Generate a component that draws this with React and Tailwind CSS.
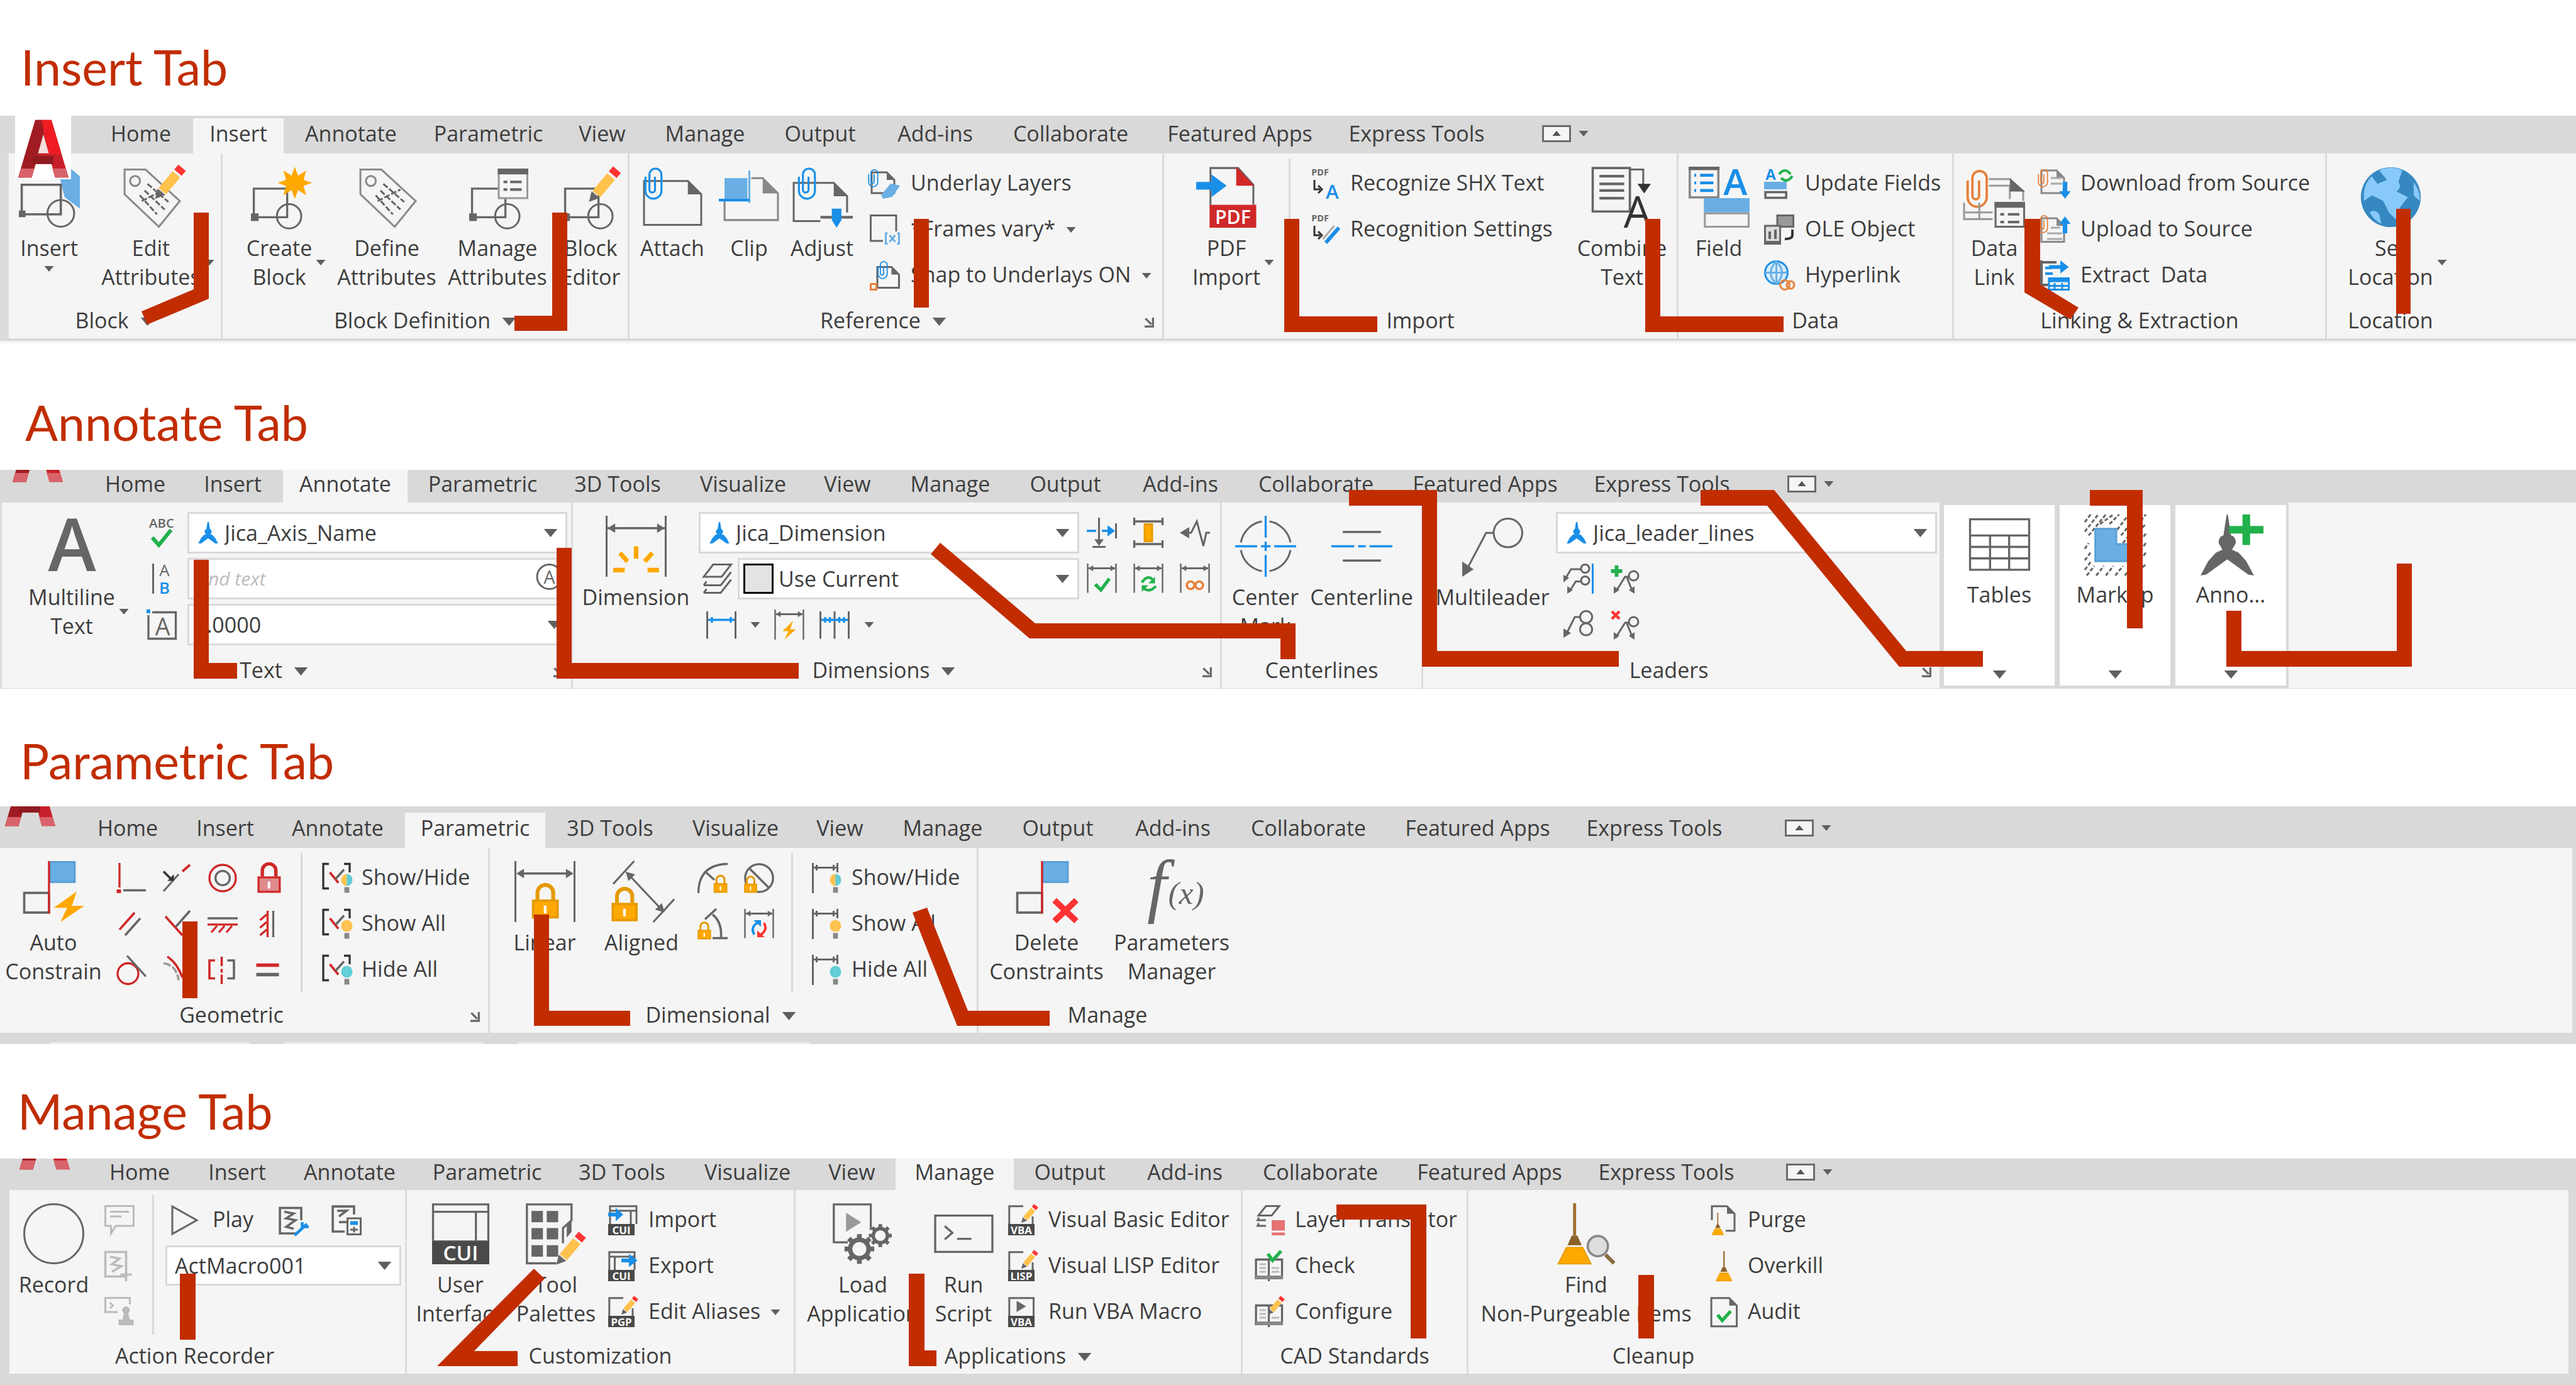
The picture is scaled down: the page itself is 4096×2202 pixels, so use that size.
import React from "react";

const G = "#666666";
const B = "#1a8fe8";
const LB = "#69afe5";
const O = "#ffa800";
const DO = "#e59a00";
const R = "#d02828";
const GR = "#22b14c";
const OR = "#e8803a";
const Y = "#ffc24d";

/* ---------- drawing helpers ---------- */
const L = ({ d, c = G, w = 1, f = "none", dash }) => (
  <path d={d} stroke={c} strokeWidth={w} fill={f} strokeDasharray={dash} />
);
const F = ({ d, c = G }) => <path d={d} fill={c} />;
const T = ({ x, y, s, c = G, b = 400, children }) => (
  <text x={x} y={y} fontSize={s} fill={c} fontWeight={b} textAnchor="middle" fontFamily="Open Sans, sans-serif">
    {children}
  </text>
);
const I16 = ({ children }) => (
  <svg viewBox="0 0 16 16" className="size-[48px] shrink-0 overflow-visible" aria-hidden="true">{children}</svg>
);
const I32 = ({ children }) => (
  <svg viewBox="0 0 32 32" className="size-[97px] shrink-0 overflow-visible" aria-hidden="true">{children}</svg>
);
const Pencil = ({ x = 0, y = 0, s = 1 }) => (
  <g transform={`translate(${x} ${y}) scale(${s})`}>
    <path d="M0 12.5 L1 8.5 L4 11Z" fill={G} />
    <path d="M2.8 9.5 L8.3 3" stroke={Y} strokeWidth="3.8" />
    <path d="M8.9 2.3 L10.5 .4" stroke="#ff3333" strokeWidth="3.8" />
  </g>
);
const Lock = ({ x = 0, y = 0, s = 1, c = O, e = DO }) => (
  <g transform={`translate(${x} ${y}) scale(${s})`}>
    <path d="M3 8V4.5a4 4 0 0 1 8 0V8" fill="none" stroke={e} strokeWidth="2" />
    <rect x=".75" y="8.5" width="12.5" height="8.5" fill={c} stroke={e} strokeWidth="1.2" />
    <rect x="6.2" y="11" width="1.4" height="4" fill="#fff" />
  </g>
);
const Dim = ({ c = G, h = 15.5, w = 16, y = 2.5 }) => (
  <g>
    <path d={`M.5 0V${h}M${w - 0.5} 0V${h}`} stroke={G} strokeWidth=".8" />
    <path d={`M1 ${y}H${w - 1}`} stroke={c} strokeWidth="1" />
    <path d={`M1 ${y}l2.4-1.6v3.2zM${w - 1} ${y}l-2.4-1.6v3.2z`} fill={c} />
  </g>
);
const Clip = ({ x = 0, y = 0, s = 1, c = B }) => (
  <g transform={`translate(${x} ${y}) scale(${s})`}>
    <path d="M5.5 5v6.5a1.4 1.4 0 0 1-2.8 0V4a3 3 0 0 1 6 0v8a4 4 0 0 1-8 0V5" fill="none" stroke={c} strokeWidth="1" />
  </g>
);
const COMPASS = "M15.700 0 16.300 0 18 11Q20.500 11.500 20.500 15L18.500 18.500 22 20 26 24.500 30 32 27 31.500 16 23.500 5 31.500 2 32 6 24.500 10 20 13.500 18.500 11.500 15Q11.500 11.500 14 11Z";
const Compass = () => (
  <svg viewBox="0 0 32 32" className="h-[34px] w-[36px] shrink-0" aria-hidden="true">
    <path d={COMPASS} fill={B} stroke={B} strokeWidth="1.5" />
  </svg>
);
const Doc = ({ x, y, w, h, f = 4, c = G, sw = 1 }) => (
  <g>
    <path d={`M${x} ${y}H${x + w - f}L${x + w} ${y + f}V${y + h}H${x}Z`} fill="none" stroke={c} strokeWidth={sw} />
    <path d={`M${x + w - f} ${y}L${x + w} ${y + f}H${x + w - f}Z`} fill={c} />
  </g>
);
const SqCircle = () => (
  <g>
    <L d="M2.500 11.500H20V26.500H2.500Z" w={1.1} />
    <F d="M1 24.500h4v4H1z" />
    <circle cx="21" cy="26" r="6.400" fill="none" stroke={G} strokeWidth="1" />
  </g>
);
const Tag = () => (
  <g>
    <L d="M2 1.500H13L31 18 20 31.500 2 14.500Z" c="#8a8a8a" />
    <circle cx="7.500" cy="7.500" r="2.600" fill="none" stroke="#8a8a8a" />
    <L d="M14 9l11 9.500M10 15l9 10M12.500 12.500l10.500 10M11 18l12-6" c={G} w={1} dash="3 1" />
  </g>
);
const Gear = ({ x, y, r }) => (
  <g transform={`translate(${x} ${y}) scale(${r})`}>
    <circle r=".62" fill="none" stroke={G} strokeWidth=".3" />
    {[0, 45, 90, 135, 180, 225, 270, 315].map((a) => (
      <rect key={a} x="-.16" y="-1" width=".32" height=".34" fill={G} transform={`rotate(${a})`} />
    ))}
  </g>
);
const Broom = ({ x = 0, y = 0, s = 1 }) => (
  <g transform={`translate(${x} ${y}) scale(${s})`}>
    <path d="M9 0h1.600v17h-1.600z" fill="#a07030" />
    <path d="M8.300 17h3l2.200 5h-7.400z" fill="#8a6128" />
    <path d="M5.500 23.200h8.600l4.300 8.600H1.200z" fill={O} stroke={DO} strokeWidth=".6" />
  </g>
);
const Badge = ({ t }) => (
  <g>
    <rect x="0" y="10" width="14" height="6" fill="#4a4a4a" />
    <T x={7} y={15.200} s={5.600} c="#fff" b={700}>{t}</T>
  </g>
);
const Bulb = ({ x, y, a, b }) => (
  <g>
    <path d={`M${x} ${y - 3.200}a3 3.200 0 0 0 0 6.400z`} fill={a} />
    <path d={`M${x} ${y - 3.200}a3 3.200 0 0 1 0 6.400z`} fill={b} />
    <rect x={x - 1.300} y={y + 3.800} width="2.600" height="3" fill="#888" />
  </g>
);
const Squares = () => (
  <g>
    <rect x="14" y=".5" width="13" height="10.500" fill={LB} stroke="#5a9fd4" />
    <L d="M.500 16.700H13.500V27H.500Z" w={1.200} />
    <L d="M13.500 0V27.500" c={R} w={1.100} />
  </g>
);

const icons = {
  /* insert */
  insert: <I32><path d="M21 4 26 0 32 5V22L24 16Z" fill={LB} /><L d="M1.500 9.500H22V25H1.500Z" w={1.200} f="#f5f5f5" /><F d="M0 23h3.500v3.500H0z" /><circle cx="22" cy="24.500" r="7" fill="none" stroke={G} /></I32>,
  editAttr: <I32><Tag /><Pencil x={18} y={0} s={1.350} /></I32>,
  create: <I32><SqCircle /><path d="M24 0l1.700 4.700L30 2l-1.400 4.900L33 8.500l-4.400 1.600L30 15l-4.300-2.700L24 17l-1.700-4.700L18 15l1.400-4.900L15 8.500l4.400-1.600L18 2l4.300 2.700z" fill={O} /></I32>,
  define: <I32><Tag /></I32>,
  manage: <I32><SqCircle /><rect x="16.500" y="1.500" width="15" height="15" fill="#f5f5f5" stroke="#999" /><F d="M16 1h16v3H16z" /><L d="M19 8h2M22.500 8h6M19 12h2M22.500 12h6" w={1.400} /></I32>,
  editor: <I32><SqCircle /><Pencil x={15} y={1} s={1.400} /></I32>,
  attach: <I32><Doc x={1} y={7.500} w={30} h={23} f={7} /><Clip x={1} y={0} s={1.050} /></I32>,
  clip: <I32><Doc x={3} y={6} w={28} h={22} f={8} c="#888" /><rect x="2" y="5" width="15" height="13" fill="#f5f5f5" /><rect x="3" y="6" width="12" height="11" fill={LB} /><L d="M16 2V19" c={LB} w={1} /><L d="M0 17.500H16" c={B} w={1.400} /></I32>,
  adjust: <I32><Doc x={1} y={8.500} w={28} h={20} f={7} /><Clip x={3} y={0} s={1.050} /><rect x="15" y="24" width="17" height="7" fill="#f5f5f5" /><L d="M15 26.500H32" w={1.400} /><F d="M21 22h5v6l-2.500 4-2.500-4z" c={B} /></I32>,
  underlay: <I16><Doc x={1} y={2} w={12} h={11} f={4} /><Clip x={-1} y={0} s={0.6} /><F d="M6 14l5-6 5 1-4 6-5 1z" c={LB} /></I16>,
  frames: <I16><L d="M.5.500H14V14H.500Z" /><rect x="7" y="9" width="9" height="7" fill="#f5f5f5" /><L d="M9.500 10H8.500V15.500H9.500M14.500 10H15.500V15.500H14.500M10.500 11l3 3.500M13.500 11l-3 3.500" c={LB} /></I16>,
  snap: <I16><Doc x={4} y={3.500} w={11.500} h={11} f={4} /><Clip x={4} y={0} s={0.6} /><rect x=".5" y="12.500" width="3" height="3" fill="none" stroke={OR} /></I16>,
  pdf: <I32><L d="M7.500 20V.7H22L30 9.500V20" /><F d="M21 0l9.500 10H21z" c={R} /><rect x="7" y="20" width="24.500" height="12" fill={R} /><T x={19.300} y={30} s={10} c="#fff" b={600}>PDF</T><F d="M0 8h8V4l8 6-8 6v-4H0z" c={B} /></I32>,
  shx: <I16><T x={5} y={3.600} s={4.800} b={700}>PDF</T><L d="M2 6v5h3M4 9l2 2-2 2" c="#333" /><T x={11.500} y={16} s={10.500} c={B} b={600}>A</T></I16>,
  recset: <I16><T x={5} y={3.600} s={4.800} b={700}>PDF</T><L d="M2 6v5h3M4 9l2 2-2 2" c="#333" /><L d="M8 15l7-8" c={B} w={2} /><L d="M6.500 13l6-7" c="#aaa" w={1} /></I16>,
  combine: <I32><L d="M.500.700H20V23.500H.500Z" w={1.200} /><L d="M4 5H17M4 9H17M4 12.500H17M4 16.500H17" w={1.400} /><L d="M20 1.500h7V12" /><F d="M24 9h7l-3.500 5z" c="#333" /><T x={24} y={32} s={23} c="#333">A</T></I32>,
  field: <I32><rect x=".6" y=".6" width="15" height="15.500" fill="none" stroke="#888" strokeWidth="1.200" /><F d="M0 0h16.200v1.800H0z" /><L d="M3 4.500h1M6 4.500h7M3 8.500h1M6 8.500h7M3 12.500h1M6 12.500h7" c={B} w={1.500} /><T x={24.500} y={15} s={19} c={B} b={600}>A</T><F d="M8 16.500h24V24H8z" c={LB} /><rect x="8.500" y="24.500" width="23" height="7" fill="none" stroke="#999" /></I32>,
  update: <I16><T x={3.500} y={6} s={8} c={B} b={700}>A</T><L d="M8 3q3-4 6 0M15 4q-3 4-6 1" c={GR} w={1.400} /><F d="M0 7h12v4H0z" c={LB} /><rect x=".7" y="12.500" width="11" height="3" fill="none" stroke={G} strokeWidth="1.200" /></I16>,
  ole: <I16><rect x="7" y=".5" width="8.500" height="6" fill="#999" stroke={G} /><rect x=".5" y="6" width="8" height="9.500" fill="#ddd" stroke={G} /><F d="M0 14h9v2H0z" /><L d="M3 9v4M6 8v5" w={1.400} /><L d="M15 8v3q0 2-4 2" c="#333" w={1.300} /></I16>,
  hyper: <I16><circle cx="6.500" cy="6.500" r="6" fill="#d6ebfb" stroke={B} /><L d="M.500 6.500h12M6.500.500v12M6.500.500q-6 6 0 12M6.500.500q6 6 0 12" c={LB} /><circle cx="11" cy="13" r="2.500" fill="none" stroke={OR} /><circle cx="14" cy="13" r="2" fill="none" stroke={OR} /></I16>,
  datalink: <I32><Clip x={1} y={1} s={1.250} c={OR} /><L d="M13 6.500H24L31 13V18M13 10H24M0 19V27.500H15M0 24H15M8 19v8M24 10v7" c="#999" /><F d="M24 6l8 7h-8z" /><rect x="16.500" y="19" width="15" height="12.500" fill="#f5f5f5" stroke={G} /><F d="M16 18.500h16v3H16z" /><L d="M19 25h2M23 25h6M19 29h2M23 29h6" w={1.300} /></I32>,
  download: <I16><Doc x={1} y={1} w={12} h={12} f={4} c="#888" /><Clip x={-1} y={0} s={0.6} c={OR} /><L d="M6 5h6M6 8h6" c="#aaa" /><L d="M13.500 7v6" c={B} w={2.400} /><F d="M10.500 12h6l-3 4z" c={B} /></I16>,
  upload: <I16><Doc x={1} y={2} w={12} h={12.500} f={4} c="#888" /><Clip x={-1} y={0} s={0.6} c={OR} /><L d="M4 10h8M6 7h5M4 13h8" c="#aaa" /><L d="M13.500 4v6" c={B} w={2.400} /><F d="M10.500 5h6l-3-4z" c={B} /></I16>,
  extract: <I16><L d="M0 1h9M1 0v13h4" w={1.400} /><L d="M3 4h4M3 7h4" c={B} w={1.300} /><L d="M5 3.500h7" c={B} w={2} /><F d="M11 0l4.500 3.500L11 7z" c={B} /><rect x="5" y="9.500" width="10.500" height="6" fill="none" stroke={B} /><F d="M5 9h11v2.500H5z" c={B} /><L d="M8 12v4M12 12v4M5 13.500h10" c={B} /></I16>,
  globe: <I32><circle cx="16" cy="16" r="15.700" fill="#3688c0" /><path d="M10 2Q16-1 22 2L20 8q2 3-1 5l6 3-4 5-2 7-4-4-3-6-6-3-4 3Q1 10 6 5l3 4 5-2zM28 8q4 6 3 10l-3-3z" fill="#88c9fb" /><path d="M5 24q2-2 5 1l1 5q-4-2-6-6z" fill="#88c9fb" /></I32>,
  /* annotate */
  mtext: <I32><T x={16} y={29} s={38} b={600}>A</T></I32>,
  abc: <I16><T x={8} y={5.200} s={6.800} b={600}>ABC</T><L d="M3 10.500l3.500 4L13 6.500" c={GR} w={2} /></I16>,
  alignab: <I16><L d="M3.500 0v16" /><T x={9.500} y={6.600} s={8.600}>A</T><T x={9.500} y={16} s={8.600} c={B} b={600}>B</T></I16>,
  frameA: <I16><L d="M3 1.500H15.500V15.500H1V3" w={1.100} /><F d="M0 0h2v2H0z" c={B} /><T x={8.500} y={13.500} s={12.500}>A</T></I16>,
  findA: <I16><circle cx="7.500" cy="7" r="6.500" fill="none" stroke={G} /><T x={7.500} y={10.500} s={9.500}>A</T><L d="M12.500 11.500L15.500 15" w={1.600} /></I16>,
  dimension: <I32><L d="M.500 0V32M31.500 0V32" /><L d="M1 6.500H31" w={1.200} /><F d="M1 6.500l4-2.500v5zM31 6.500l-4-2.500v5z" /><L d="M16 16v6.500M7.500 19.500l4 4.500M24.500 19.500l-4 4.500M4 28.500h6M28 28.500h-6" c={O} w={2.400} /></I32>,
  layers: <I16><L d="M6 .5H15.500L10.500 7H1ZM1 11.500H10L15.500 4.500M1 15.500H10L15.500 8.500M1 11.500l1.500-2M1 15.500l1.500-2" /></I16>,
  dimLinear: <I16><L d="M.5 1V15.500M15.500 1V15.500" /><L d="M1 5.500H15M3 4v3M13 4v3" c={B} w={1.100} /></I16>,
  dimQuick: <I16><Dim h={16} /><F d="M10 6L4.500 11.500H7.500L5.500 16 11.500 10.500H8.500z" c={O} /></I16>,
  dimCont: <I16><L d="M.5 1V15.500M8 1V15.500M15.500 1V15.500" /><L d="M1 5.500H15M3 4v3M5.500 4v3M10.500 4v3M13 4v3" c={B} w={1.100} /></I16>,
  dimBreak: <I16><L d="M6.500 0V12M3 15.500h7M15.500 3v8" /><F d="M4 11.500h5L6.500 15z" /><L d="M0 7h5M8 7h4" c={B} w={1.200} /><F d="M11 4l4 3-4 3z" c={B} /></I16>,
  dimSpace: <I16><L d="M.500 0v4M15.500 0v4M.500 2h15M.500 12v4M15.500 12v4M.500 14h15" w={1.100} /><rect x="6" y="3.500" width="4" height="9" fill={O} stroke={DO} /></I16>,
  jog: <I16><L d="M4 8H6L9 2l3.500 13L14 8h2" /><F d="M0 8l5-3v6z" /></I16>,
  dimCheck: <I16><Dim /><L d="M4.500 11l3 3L12 8" c={GR} w={1.800} /></I16>,
  dimUpd: <I16><Dim /><L d="M4.500 10Q8 5 11 9.500M12 12Q8 16 5 12.500" c={GR} w={1.400} /><F d="M11.500 7v3.500h-3.500zM4.500 15v-3.500h3.500z" c={GR} /></I16>,
  dimInf: <I16><Dim /><circle cx="5.700" cy="11.500" r="2" fill="none" stroke={OR} strokeWidth="1.200" /><circle cx="10.300" cy="11.500" r="2" fill="none" stroke={OR} strokeWidth="1.200" /></I16>,
  centerMark: <I32><path d="M3 14A13.500 13.500 0 0 1 14 3M18 3A13.500 13.500 0 0 1 29 14M29 18A13.500 13.500 0 0 1 18 29M14 29A13.500 13.500 0 0 1 3 18" fill="none" stroke={G} /><L d="M16 0V11.500M16 13.500V18.500M16 20.500V32M0 16H11.500M13.500 16H18.500M20.500 16H32" c={B} w={1.100} /></I32>,
  centerline: <I32><L d="M6 8.500H26M6 23.500H26" w={1.100} /><L d="M0 16H12M14 16H18M20 16H32" c={B} w={1.100} /></I32>,
  mleader: <I32><circle cx="24" cy="9" r="7.500" fill="none" stroke={G} /><L d="M16.500 9H12.500L2 29" /><F d="M0 32V24l6 4z" /></I32>,
  ml1: <I16><circle cx="11.500" cy="2.700" r="2.200" fill="none" stroke={G} /><circle cx="11.500" cy="9" r="2.200" fill="none" stroke={G} /><L d="M9 3H4L1 8M9 9.500H6.500L3 15" /><F d="M0 10V6l3 1.500zM2 16v-4l3 2z" /><L d="M15.500 0V16" c={B} /></I16>,
  ml2: <I16><L d="M3.500 1v6M.500 4h6" c={GR} w={2} /><circle cx="12.500" cy="6.500" r="2.500" fill="none" stroke={G} /><L d="M10 7H8L3 15M9 7.500L12 15" /><F d="M2 16v-4l3 2zM13 16v-4l-3 2z" /></I16>,
  ml3: <I16><circle cx="12" cy="4" r="3.200" fill="none" stroke={G} /><circle cx="12" cy="10.500" r="3.200" fill="none" stroke={G} /><L d="M9 4H6L2 12" /><F d="M0 15v-5l4 2.500z" /></I16>,
  ml4: <I16><L d="M1 1l4 4M5 1l-4 4" c="#ff3333" w={1.500} /><circle cx="12.500" cy="6.500" r="2.500" fill="none" stroke={G} /><L d="M10 7H8L3 15M9 7.500L12 15" /><F d="M2 16v-4l3 2zM13 16v-4l-3 2z" /></I16>,
  tables: <I32><L d="M.5 2.500H31.500V29H.500ZM.500 11H31.500M.500 17H31.500M.500 23H31.500M11 11V29M21 11V29" w={1.100} /></I32>,
  markup: <I32><L d="M0 4L3 0M0 9L7 0M2 11L11 0M0 18L2 15M8 5L15 0M13 5L18 0M17 8L23 0M19 11L28 0M20 15L32 0M28 9L32 5M29 14L32 10M29 19L32 15M29 24L32 20M0 24L3 20M0 29L3 25M1 32L5 27M6 32L10 27M11 32L15 27M16 32L20 27M21 32L25 27M26 32L32 26" dash="2 1" /><path d="M5.500 7.500H16.500V15.500H28V24.500H5.500Z" fill={LB} stroke="#5a9fd4" /></I32>,
  anno: <I32><path d={COMPASS} fill={G} transform="translate(-2 0)" /><path d="M22 0h4v6h7v4h-7v6h-4v-6h-7V6h7z" fill={GR} /></I32>,
  /* parametric */
  auto: <I32><Squares /><F d="M28 16L16 24.500H23L19.500 32 32 23.500H25.500z" c={O} /></I32>,
  coin: <I16><L d="M2 0v13" c={R} w={1.100} /><F d="M.500 14h2.300v2H.500z" c={R} /><L d="M4 14.500h12" w={1.200} /></I16>,
  collin: <I16><L d="M1 15L9 6" /><L d="M11 4.500L15 1" c={R} w={1.300} /><L d="M1 4.500l4 4" c="#333" w={1.200} /><F d="M3 9.500h3.500V6z" c="#333" /></I16>,
  conc: <I16><circle cx="8" cy="8" r="7" fill="none" stroke={R} strokeWidth="1.100" /><circle cx="8" cy="8" r="3.800" fill="none" stroke={G} strokeWidth="1.100" /></I16>,
  fix: <I16><Lock x={2} y={0} s={0.9} c="#e08b8e" e={R} /></I16>,
  par: <I16><L d="M2 11L10 2" c={R} w={1.200} /><L d="M5 14L13 5" w={1.200} /></I16>,
  perp: <I16><L d="M2 4l9 10" c={R} w={1.200} /><L d="M15 1L7.500 9.500" w={1.200} /></I16>,
  horiz: <I16><L d="M0 5h16" w={1.100} /><L d="M0 8.300h16M5 9l-3 3.500M9 9l-3 3.500M13 9l-3 3.500" c={R} w={1.100} /></I16>,
  vert: <I16><L d="M10.500 1v14" w={1.100} /><L d="M7.500 1v14M7 3l-3.500 3M7 7l-3.500 3M7 11l-3.500 3" c={R} w={1.100} /></I16>,
  tan: <I16><circle cx="6.500" cy="10" r="5.500" fill="none" stroke={R} strokeWidth="1.100" /><L d="M6 .5L16 11.500" w={1.100} /></I16>,
  smooth: <I16><L d="M3 1q5 3 8 11" c={R} w={1.200} /><L d="M1 4.500q7 1 8 9" c="#999" w={1.200} dash="4 1" /></I16>,
  sym: <I16><L d="M4 3H1V12.500H4M7.500 1v5M7.500 7.500v2M7.500 10.500v5" c={R} w={1.200} /><L d="M10.500 3H14V12.500H10.500" w={1.200} /></I16>,
  equal: <I16><L d="M1.500 5.500h12" c={R} w={1.800} /><L d="M1.500 10.500h12" w={1.800} /></I16>,
  linear: <I32><L d="M.5 0V32M31.500 0V32" /><L d="M2 6.500H30" w={1.200} /><F d="M1 6.500l4-2.500v5zM31 6.500l-4-2.500v5z" /><Lock x={9} y={12} s={1.030} /></I32>,
  aligned: <I32><L d="M12 0L1 12M33 20L22 32M9 7L26 25" w={1} /><F d="M7.500 5.500l5 1.500-3.500 3.500zM28 27l-5-1.500 3.500-3.500z" /><Lock x={0} y={14} s={1} /></I32>,
  rad: <I16><L d="M.500 16Q.500 1 16 .500M4 4.500L9 9" w={1.100} /><Lock x={8.500} y={6.500} s={0.530} /></I16>,
  dia: <I16><circle cx="8" cy="8" r="7.400" fill="none" stroke={G} strokeWidth="1.100" /><L d="M3 3l10 10" w={1.100} /><Lock x={0} y={7} s={0.500} /></I16>,
  ang: <I16><L d="M4 5.500L10 0M8 3q5 4 4.500 12M8 15.500h8" w={1.200} /><Lock x={0} y={7} s={0.520} /></I16>,
  conv: <I16><Dim /><L d="M7.500 7Q3 10 5.500 13.500" c={B} w={1.300} /><F d="M5 6h4v3.500z" c={B} /><L d="M8.500 14Q13 11 10.500 7.500" c="#ff3333" w={1.300} /><F d="M11 15H7v-3.500z" c="#ff3333" /></I16>,
  del: <I32><Squares /><L d="M20 20.500L31.500 31.500M31.500 20.500L20 31.500" c="#ff3333" w={3.200} /></I32>,
  fx: (
    <I32>
      <text x="3" y="25" fontSize="37" fill={G} fontStyle="italic" fontFamily="Liberation Serif, serif">f</text>
      <text x="14" y="22.500" fontSize="17" fill={G} fontStyle="italic" fontFamily="Liberation Serif, serif">(x)</text>
    </I32>
  ),
  /* manage */
  record: <I32><circle cx="16" cy="16" r="15.500" fill="none" stroke={G} /></I32>,
  msg: <I16><L d="M.500.500H15.500V11H6L3.500 15V11H.500ZM3 3.500h10M3 6h6" c="#bbb" /></I16>,
  msg2: <I16><L d="M.500.500H11.500V13.500H.500ZM3 3l5 1-4 3 5 1-5 3M8.500 12.500h6M11.500 10v6" c="#bbb" w={1.200} /></I16>,
  msg3: <I16><L d="M7 8H.500V.500H13.500V4M3 3l1.500 1.500L3 6" c="#bbb" /><circle cx="11.500" cy="7" r="2" fill="#bbb" /><F d="M10.500 8h2l1 4h2v3h-8v-3h2z" c="#bbb" /></I16>,
  play: <I16><L d="M1 .700V15.300L14 8Z" /></I16>,
  macro1: <I16><L d="M10 15H.700V1.500H12V8M3 3.500l5 1-4 2.500 5 1-5 3.500 4 1" w={1.200} /><L d="M8.500 16L15 10M12.500 9v2.500H16" c={B} w={1.500} /></I16>,
  macro2: <I16><L d="M7 14H.700V.700H12V5M3 3h5l-4 3M4 9h4" w={1.200} /><rect x="8.500" y="7" width="7" height="8.500" fill="#f5f5f5" stroke={G} /><F d="M10 8.500h4v2h-4z" c={B} /><L d="M10 13h4M12 11.500v3" /></I16>,
  cui: <I32><L d="M1.500.600H30.500V20H1.500ZM1.500 4.500H30.500M24 4.500V20" w={1.100} /><rect x="1" y="20" width="30" height="12" fill="#4a4a4a" /><T x={16} y={30} s={11} c="#fff" b={600}>CUI</T></I32>,
  palettes: <I32><L d="M16 31.500H.600V.600H24V9L19.500 13V21" w={1.100} /><F d="M3 4h6v6H3zM11 4h6v6h-6zM3 13h6v6H3zM11 13h6v6h-6zM3 22h6v6H3zM11 22h6v6h-6z" /><F d="M24 9v6l-2.500 3v-6z" /><Pencil x={16} y={16} s={1.300} /></I32>,
  imp: <I16><L d="M1 10V.600H15V10M1 3H15M12 3v7" /><Badge t="CUI" /><F d="M0 4h4V1.500L8 5 4 8.500V6H0z" c={B} /></I16>,
  exp: <I16><L d="M.600 10V.600H14V10M.600 3H14M3.500 3v7" /><Badge t="CUI" /><F d="M7 4h4V1.500L15.500 5 11 8.500V6H7z" c={B} /></I16>,
  alias: <I16><L d="M.600 10V.600H8M13 6v4" /><Badge t="PGP" /><Pencil x={7} y={0} s={0.75} /></I16>,
  load: <I32><L d="M8 20.500H.600V.600H20V14" w={1.100} /><F d="M7 5l8 5-8 5z" c="#999" /><Gear x={14} y={24} r={7.800} /><Gear x={25} y={17} r={6} /></I32>,
  script: <I32><L d="M1 6.500H31V25.500H1Z" w={1.100} /><L d="M6 12l4 3.500L6 19M12.500 18.700h7.500" w={1.100} /></I32>,
  vba: <I16><L d="M.600 10V.600H8M13 6v4" /><Badge t="VBA" /><Pencil x={7} y={0} s={0.75} /></I16>,
  lisp: <I16><L d="M.600 10V.600H8M13 6v4" /><Badge t="LISP" /><Pencil x={7} y={0} s={0.75} /></I16>,
  runvba: <I16><L d="M.600 10V.600H13.500V10" /><F d="M4.500 2l5 3-5 3z" /><Badge t="VBA" /></I16>,
  ltrans: <I16><L d="M6 .5H13L9 5.500H2ZM1 8h5M1 11h5M2 6.500V8M2 9.500V11" /><rect x="9" y="8" width="7" height="8" fill="#e57373" /><F d="M9 13.500h7v1H9z" c="#fff" /></I16>,
  check: <I16><L d="M.700 4.500H14.500V14H.700ZM7.500 5V16" w={1.100} /><L d="M2.500 7h3.500M2.500 9h3.500M2.500 11h3.500M9 9h4M9 11h4" c="#bbb" /><F d="M0 13h15v2H0z" c="#888" /><L d="M7 1.500l2.500 3.500L14 0" c={GR} w={1.800} /></I16>,
  config: <I16><L d="M.700 4.500H14.500V14H.700ZM7.500 5V16" w={1.100} /><L d="M2.500 7h3.500M2.500 9h3.500M2.500 11h3.500M9 11h4" c="#bbb" /><F d="M0 13h15v2H0z" c="#888" /><Pencil x={7} y={0} s={0.75} /></I16>,
  find: <I32><Broom /><circle cx="22" cy="22.500" r="5.300" fill="#ddd" stroke="#888" strokeWidth="1.200" /><L d="M26 27l4.500 4.500" c="#8a6a40" w={2} /></I32>,
  purge: <I16><Doc x={1} y={0.600} w={12} h={13} f={4} /><rect x=".3" y="8" width="8" height="8" fill="#f5f5f5" /><Broom x={0.5} y={4} s={0.370} /></I16>,
  overkill: <I16><Broom x={2.500} y={0} s={0.500} /></I16>,
  audit: <I16><Doc x={0.700} y={0.600} w={13.500} h={15} f={4} /><L d="M4 9.500l2.500 3L11 7.500" c={GR} w={1.700} /></I16>,
};
const geo = (a, b) => (
  <I16>
    <L d="M4 .5H1V13.500H4M12 .500H15V5" c="#333" w={1.100} />
    <L d="M4.500 5L9 10.500" c={R} w={1.200} />
    <L d="M12 3.500L7.500 8.500" w={1.200} />
    <Bulb x={13.500} y={9} a={a} b={b} />
  </I16>
);
const dimb = (a, b) => (
  <I16>
    <L d="M.500 0V16M13.500 0V5M.500 2.500H13.500M2.500 1v3M11.500 1v3" />
    <Bulb x={12.500} y={9} a={a} b={b} />
  </I16>
);
const CY = "#5fcdd6";

/* ---------- ribbon building blocks ---------- */
const Tri = ({ big }) => (
  <svg viewBox="0 0 20 12" className={big ? "h-[13px] w-[23px] shrink-0" : "h-[9px] w-[16px] shrink-0"} aria-hidden="true">
    <path d="M0 0H20L10 12Z" fill="#5f5f5f" />
  </svg>
);

const Big = ({ icon, label, w, side, below }) => (
  <button type="button" className={`flex shrink-0 flex-col items-center justify-start pt-[21px] ${w}`}>
    {icons[icon]}
    <span className="mt-[9px] grid w-full grid-cols-[minmax(0,1fr)_auto_minmax(0,1fr)] items-center justify-center leading-[46px]">
      <span />
      <span className="whitespace-nowrap">
        {label.map((t) => (
          <span key={t} className="block">{t}</span>
        ))}
      </span>
      <span className="flex pl-[6px]">{side && <Tri />}</span>
    </span>
    {below && <span className="mt-[6px]"><Tri /></span>}
  </button>
);

const Small = ({ icon, label, arrow, gap = "gap-[17px]" }) => (
  <button type="button" className={`flex h-[66px] items-center whitespace-pre ${gap}`}>
    {typeof icon === "string" ? icons[icon] : icon}
    <span className="pb-[4px]">{label}</span>
    {arrow && <Tri />}
  </button>
);

const IconBtn = ({ icon, label }) => (
  <button type="button" aria-label={label} className="flex h-[66px] items-center">{icons[icon]}</button>
);

const Stack = ({ ml = "", children }) => (
  <div className={`flex shrink-0 flex-col gap-[7px] pt-[15px] ${ml}`}>{children}</div>
);

const Rule = ({ ml = "" }) => <div className={`mt-[8px] h-[222px] w-[3px] shrink-0 bg-[#d9d9d9] ${ml}`} />;

const Launcher = () => (
  <button type="button" aria-label="Open settings" className="flex w-[40px] shrink-0 justify-center pt-[8px]">
    <svg viewBox="0 0 6 6" className="size-[16px]"><path d="M.5.500l3.500 3.500M5 0V5.300H0" fill="none" stroke="#666" strokeWidth="1.200" /></svg>
  </button>
);

const Panel = ({ title, arrow, launcher, pad, w, last, children }) => (
  <section aria-label={title} className={`flex shrink-0 flex-col ${last ? "" : "border-r-[3px] border-[#dcdcdc]"} ${w}`}>
    <div className="flex flex-1">{children}</div>
    <div className="flex h-[46px] items-center pb-[12px]">
      <div className="flex flex-1 items-center justify-center gap-[18px] whitespace-nowrap">
        <h3>{title}</h3>
        {arrow && <button type="button" aria-label={`More ${title}`} className="flex pt-[4px]"><Tri big /></button>}
      </div>
      {launcher && <Launcher />}
      {pad && <div className="w-[40px]" />}
    </div>
  </section>
);

const Combo = ({ value, w, lead, label, h = "h-[66px]", pl = "pl-[12px]" }) => (
  <div className={`flex items-center gap-[8px] border-[3px] border-[#d9d9d9] bg-white pr-[12px] ${pl} ${w} ${h}`}>
    {lead}
    <select aria-label={label} className="min-w-0 flex-1 appearance-none bg-transparent outline-none">
      <option>{value}</option>
    </select>
    <Tri big />
  </div>
);

const tabWidth = {
  Home: "w-[150px]", Insert: "w-[144px]", Annotate: "w-[198px]", Parametric: "w-[223px]", "3D Tools": "w-[190px]",
  Visualize: "w-[193px]", View: "w-[123px]", Manage: "w-[188px]", Output: "w-[162px]", "Add-ins": "w-[188px]",
  Collaborate: "w-[227px]", "Featured Apps": "w-[295px]", "Express Tools": "w-[251px]",
};
const allTabs = Object.keys(tabWidth);

const Logo = () => (
  <svg viewBox="0 0 28 32" className="h-[97px] w-[80px] shrink-0" aria-label="Application logo">
    <path d="M0 32L9.500 0H18.500L28 32H20.500L18.500 24.500H9.500L7.500 32Z" fill="#c8202a" />
    <path d="M0 32L9.500 0H14V10L7.500 32Z" fill="#a01c22" />
    <path d="M13 0H18.500L24 19H17Z" fill="#ee1c22" />
    <path d="M8.500 20H19.500V24.500H7.500Z" fill="#8f1a20" />
    <path d="M14 8L17 18.500H11Z" fill="#f4dede" />
    <path d="M1.500 27H9L7.500 32H0ZM19 27H26.500L28 32H20.500Z" fill="#d9636a" />
  </svg>
);

const TabBar = ({ tabs, active, h, logo, iconMl }) => (
  <div role="tablist" className={`flex bg-[#d9d9d9] ${h}`}>
    {logo}
    <div className="flex gap-[8px]">
      {tabs.map((t) => (
        <button
          key={t}
          type="button"
          role="tab"
          aria-selected={t === active}
          className={`flex items-center justify-center whitespace-nowrap pb-[9px] ${tabWidth[t]} ${t === active ? "bg-[#f5f5f5]" : ""}`}
        >
          {t}
        </button>
      ))}
    </div>
    <button type="button" aria-label="Minimise ribbon" className={`flex items-center gap-[12px] pb-[8px] ${iconMl}`}>
      <span className="flex h-[27px] w-[46px] items-center justify-center border-[3px] border-[#6b6b6b] bg-[#f5f5f5]">
        <svg viewBox="0 0 10 6" className="h-[8px] w-[14px]"><path d="M0 6L5 0l5 6z" fill="#555" /></svg>
      </span>
      <Tri />
    </button>
  </div>
);

const Title = ({ children, cls }) => (
  <h2 className={`font-[Lato,sans-serif] text-[77px] leading-[100px] text-[#c12d00] ${cls}`}>{children}</h2>
);

const ClippedLogo = ({ w, pl, h }) => (
  <div className={`shrink-0 ${w} ${pl}`}>
    <div className={`flex items-end overflow-hidden ${h}`}><Logo /></div>
  </div>
);

const Slot = ({ icon, label }) => (
  <button type="button" className="flex w-[176px] flex-col items-center bg-white pt-[15px]">
    {icons[icon]}
    <span className="mt-[7px] flex-1 leading-[46px]">{label}</span>
    <span className="mb-[11px]"><Tri big /></span>
  </button>
);

const marks = [
  "308,338 332,338 332,475 234,516 225,495 308,460",
  "878,338 902,338 902,526 818,526 818,502 878,502",
  "1453,348 1477,348 1477,489 1453,489",
  "2042,348 2066,348 2066,503 2190,503 2190,528 2042,528",
  "2616,348 2640,348 2640,503 2836,503 2836,528 2616,528",
  "3219,348 3244,348 3244,452 3305,489 3292,508 3219,465",
  "3810,332 3833,332 3833,499 3810,499",
  "308,890 332,890 332,1054 377,1054 377,1079 308,1079",
  "885,871 909,871 909,1054 1270,1054 1270,1079 885,1079",
  "1495,863 1646,991 2060,991 2060,1048 2036,1048 2036,1015 1637,1015 1480,881",
  "2145,779 2285,779 2285,1035 2574,1035 2574,1060 2261,1060 2261,804 2145,804",
  "2704,779 2821,779 3031,1035 3153,1035 3153,1060 3020,1060 2810,804 2704,804",
  "3323,779 3407,779 3407,999 3382,999 3382,804 3323,804",
  "3540,971 3564,971 3564,1035 3811,1035 3811,896 3835,896 3835,1060 3540,1060",
  "290,1465 314,1465 314,1587 290,1587",
  "849,1454 873,1454 873,1607 1002,1607 1002,1631 849,1631",
  "1474,1443 1539,1607 1669,1607 1669,1631 1522,1631 1451,1451",
  "286,2025 311,2025 311,2130 286,2130",
  "849,2017 866,2033 754,2148 823,2148 823,2172 695,2172",
  "1445,2025 1470,2025 1470,2147 1489,2147 1489,2172 1445,2172",
  "2125,1915 2268,1915 2268,2128 2243,2128 2243,1939 2125,1939",
  "2605,2027 2630,2027 2630,2128 2605,2128",
];

export default function App() {
  const tabsNo3d = allTabs.filter((t) => t !== "3D Tools" && t !== "Visualize");
  return (
    <main className="relative w-full overflow-hidden bg-white font-['Open_Sans',sans-serif] text-[34px] leading-[46px] text-[#3d3d3d]">
      {/* Insert */}
      <section className="pt-[56px]">
        <Title cls="pl-[33px]">Insert Tab</Title>
        <div className="relative mt-[28px]">
          <TabBar
            tabs={tabsNo3d}
            active="Insert"
            h="h-[60px] pt-[4px]"
            iconMl="ml-[74px]"
            logo={<div className="w-[149px] shrink-0" />}
          />
          <div className="absolute left-[24px] top-0 flex h-[101px] w-[89px] items-end justify-center bg-white"><Logo /></div>
          <div className="flex h-[294px] border-l-[14px] border-[#dcdcdc] bg-[#f5f5f5]">
            <Panel title="Block" arrow w="w-[340px]">
              <Big icon="insert" label={["Insert"]} w="w-[128px]" below />
              <Big icon="editAttr" label={["Edit", "Attributes"]} w="w-[196px]" side />
            </Panel>
            <Panel title="Block Definition" arrow w="w-[647px]">
              <Big icon="create" label={["Create", "Block"]} w="w-[180px]" side />
              <Big icon="define" label={["Define", "Attributes"]} w="w-[162px]" />
              <Big icon="manage" label={["Manage", "Attributes"]} w="w-[190px]" />
              <Big icon="editor" label={["Block", "Editor"]} w="w-[106px]" />
            </Panel>
            <Panel title="Reference" arrow launcher w="w-[850px]">
              <Big icon="attach" label={["Attach"]} w="w-[136px]" />
              <Big icon="clip" label={["Clip"]} w="w-[108px]" />
              <Big icon="adjust" label={["Adjust"]} w="w-[124px]" />
              <Stack ml="ml-[14px]">
                <Small icon="underlay" label="Underlay Layers" />
                <Small icon="frames" label="*Frames vary*" arrow />
                <Small icon="snap" label="Snap to Underlays ON" arrow />
              </Stack>
            </Panel>
            <Panel title="Import" w="w-[818px]">
              <Big icon="pdf" label={["PDF", "Import"]} w="w-[198px]" side />
              <Rule />
              <Stack ml="ml-[32px]">
                <Small icon="shx" label="Recognize SHX Text" gap="gap-[15px]" />
                <Small icon="recset" label="Recognition Settings" gap="gap-[15px]" />
              </Stack>
              <div className="flex-1" />
              <Big icon="combine" label={["Combine", "Text"]} w="w-[174px]" />
            </Panel>
            <Panel title="Data" w="w-[438px]">
              <Big icon="field" label={["Field"]} w="w-[128px]" />
              <Stack ml="ml-[8px]">
                <Small icon="update" label="Update Fields" />
                <Small icon="ole" label="OLE Object" />
                <Small icon="hyper" label="Hyperlink" />
              </Stack>
            </Panel>
            <Panel title="Linking & Extraction" w="w-[593px]">
              <Big icon="datalink" label={["Data", "Link"]} w="w-[128px]" />
              <Stack ml="ml-[8px]">
                <Small icon="download" label="Download from Source" />
                <Small icon="upload" label="Upload to Source" />
                <Small icon="extract" label="Extract  Data" />
              </Stack>
            </Panel>
            <Panel title="Location" w="w-[202px]" last>
              <Big icon="globe" label={["Set", "Location"]} w="w-[202px]" side />
            </Panel>
          </div>
          <div className="h-[8px] border-t-[4px] border-[#d9d9d9] bg-[#f5f5f5]" />
        </div>
      </section>

      {/* Annotate */}
      <section className="mt-[75px]">
        <Title cls="pl-[40px]">Annotate Tab</Title>
        <div className="mt-[26px]">
          <TabBar tabs={allTabs} active="Annotate" h="h-[52px]" iconMl="ml-[74px]" logo={<ClippedLogo w="w-[140px]" pl="pl-[20px]" h="h-[22px]" />} />
          <div className="flex h-[296px] border-b border-l-[3px] border-[#dcdcdc] bg-[#f5f5f5]">
            <Panel title="Text" arrow launcher w="w-[908px]">
              <Big icon="mtext" label={["Multiline", "Text"]} w="w-[222px]" side />
              <Stack ml="ml-[8px]">
                <IconBtn icon="abc" label="Check spelling" />
                <IconBtn icon="alignab" label="Align text" />
                <IconBtn icon="frameA" label="Text frame" />
              </Stack>
              <Stack ml="ml-[17px]">
                <Combo label="Text style" value="Jica_Axis_Name" w="w-[604px]" lead={<Compass />} />
                <div className="flex h-[66px] w-[604px] items-center border-[3px] border-[#d9d9d9] bg-white pl-[8px]">
                  <input aria-label="Find text" placeholder="Find text" className="min-w-0 flex-1 bg-transparent text-[30px] italic outline-none placeholder:text-[#bdbdbd]" />
                  {icons.findA}
                </div>
                <div className="flex h-[66px] w-[604px] items-center border-[3px] border-[#d9d9d9] bg-white pl-[8px] pr-[6px]">
                  <input aria-label="Text height" defaultValue="1.0000" className="min-w-0 flex-1 bg-transparent outline-none" />
                  <Tri big />
                </div>
              </Stack>
            </Panel>
            <Panel title="Dimensions" arrow launcher w="w-[1032px]">
              <Big icon="dimension" label={["Dimension"]} w="w-[200px]" />
              <Stack>
                <Combo label="Dimension style" value="Jica_Dimension" w="w-[605px]" lead={<Compass />} />
                <div className="flex items-center gap-[9px] pl-[5px]">
                  {icons.layers}
                  <Combo
                    label="Dimension layer"
                    value="Use Current"
                    w="w-[543px]"
                    pl="pl-[6px]"
                    lead={<span className="size-[48px] border-[3px] border-black bg-[#e3e3e3]" />}
                  />
                </div>
                <div className="flex h-[66px] items-center pl-[12px]">
                  <IconBtn icon="dimLinear" label="Linear" />
                  <span className="mx-[22px]"><Tri /></span>
                  <IconBtn icon="dimQuick" label="Quick dimension" />
                  <span className="ml-[24px] flex"><IconBtn icon="dimCont" label="Continue" /></span>
                  <span className="mx-[23px]"><Tri /></span>
                </div>
              </Stack>
              <div className="ml-[12px] grid grid-cols-3 content-start gap-x-[26px] gap-y-[7px] pt-[15px]">
                <IconBtn icon="dimBreak" label="Break" />
                <IconBtn icon="dimSpace" label="Adjust space" />
                <IconBtn icon="jog" label="Jog line" />
                <IconBtn icon="dimCheck" label="Inspect" />
                <IconBtn icon="dimUpd" label="Update" />
                <IconBtn icon="dimInf" label="Reassociate" />
              </div>
            </Panel>
            <Panel title="Centerlines" w="w-[320px]">
              <Big icon="centerMark" label={["Center", "Mark"]} w="w-[138px]" />
              <Big icon="centerline" label={["Centerline"]} w="w-[168px]" />
            </Panel>
            <Panel title="Leaders" launcher w="w-[821px]" last>
              <div className="w-[9px]" />
              <Big icon="mleader" label={["Multileader"]} w="w-[202px]" />
              <Stack>
                <Combo label="Leader style" value="Jica_leader_lines" w="w-[606px]" lead={<Compass />} />
                <div className="flex gap-[26px] pl-[12px]">
                  <IconBtn icon="ml1" label="Align leaders" />
                  <IconBtn icon="ml2" label="Add leader" />
                </div>
                <div className="flex gap-[26px] pl-[12px]">
                  <IconBtn icon="ml3" label="Collect leaders" />
                  <IconBtn icon="ml4" label="Remove leader" />
                </div>
              </Stack>
            </Panel>
            <div className="flex shrink-0 gap-[8px] bg-[#d9d9d9] pb-[4px] pl-[7px] pr-[4px] pt-[4px]">
              <Slot icon="tables" label="Tables" />
              <Slot icon="markup" label="Markup" />
              <Slot icon="anno" label="Anno..." />
            </div>
          </div>
        </div>
      </section>

      {/* Parametric */}
      <section className="mt-[64px]">
        <Title cls="pl-[32px]">Parametric Tab</Title>
        <div className="mt-[23px]">
          <TabBar tabs={allTabs} active="Parametric" h="h-[66px] pt-[10px]" iconMl="ml-[82px]" logo={<ClippedLogo w="w-[128px]" pl="-mt-[10px] pl-[8px]" h="h-[34px]" />} />
          <div className="flex h-[294px] border-r-[6px] border-[#d9d9d9] bg-[#f5f5f5]">
            <Panel title="Geometric" launcher w="w-[779px]">
              <Big icon="auto" label={["Auto", "Constrain"]} w="w-[170px]" />
              <div className="ml-[14px] grid grid-cols-4 content-start gap-x-[25px] gap-y-[7px] pt-[15px]">
                <IconBtn icon="coin" label="Coincident" />
                <IconBtn icon="collin" label="Collinear" />
                <IconBtn icon="conc" label="Concentric" />
                <IconBtn icon="fix" label="Fix" />
                <IconBtn icon="par" label="Parallel" />
                <IconBtn icon="perp" label="Perpendicular" />
                <IconBtn icon="horiz" label="Horizontal" />
                <IconBtn icon="vert" label="Vertical" />
                <IconBtn icon="tan" label="Tangent" />
                <IconBtn icon="smooth" label="Smooth" />
                <IconBtn icon="sym" label="Symmetric" />
                <IconBtn icon="equal" label="Equal" />
              </div>
              <Rule ml="ml-[27px]" />
              <Stack ml="ml-[30px]">
                <Small icon={geo(Y, CY)} label="Show/Hide" gap="gap-[16px]" />
                <Small icon={geo(Y, Y)} label="Show All" gap="gap-[16px]" />
                <Small icon={geo(CY, CY)} label="Hide All" gap="gap-[16px]" />
              </Stack>
            </Panel>
            <Panel title="Dimensional" arrow pad w="w-[777px]">
              <Big icon="linear" label={["Linear"]} w="w-[174px]" below />
              <Big icon="aligned" label={["Aligned"]} w="w-[134px]" />
              <div className="ml-[22px] grid grid-cols-2 content-start gap-x-[26px] gap-y-[7px] pt-[15px]">
                <IconBtn icon="rad" label="Radius" />
                <IconBtn icon="dia" label="Diameter" />
                <IconBtn icon="ang" label="Angular" />
                <IconBtn icon="conv" label="Convert" />
              </div>
              <Rule ml="ml-[27px]" />
              <Stack ml="ml-[30px]">
                <Small icon={dimb(Y, CY)} label="Show/Hide" gap="gap-[15px]" />
                <Small icon={dimb(Y, Y)} label="Show All" gap="gap-[15px]" />
                <Small icon={dimb(CY, CY)} label="Hide All" gap="gap-[15px]" />
              </Stack>
            </Panel>
            <Panel title="Manage" w="w-[410px]" last>
              <div className="w-[10px]" />
              <Big icon="del" label={["Delete", "Constraints"]} w="w-[196px]" />
              <Big icon="fx" label={["Parameters", "Manager"]} w="w-[202px]" />
            </Panel>
          </div>
          <div className="flex h-[18px] items-end gap-[54px] bg-[#d9d9d9] pl-[79px]">
            <div className="h-[3px] w-[318px] bg-[#ebebeb]" />
            <div className="h-[3px] w-[318px] bg-[#ebebeb]" />
            <div className="h-[3px] w-[465px] bg-[#ebebeb]" />
          </div>
        </div>
      </section>

      {/* Manage */}
      <section className="mt-[56px]">
        <Title cls="pl-[28px]">Manage Tab</Title>
        <div className="mt-[26px]">
          <TabBar tabs={allTabs} active="Manage" h="h-[50px]" iconMl="ml-[65px]" logo={<ClippedLogo w="w-[147px]" pl="pl-[31px]" h="h-[20px]" />} />
          <div className="flex h-[292px] border-l-[15px] border-r-[12px] border-[#d9d9d9] bg-[#f5f5f5]">
            <Panel title="Action Recorder" pad w="w-[632px]">
              <Big icon="record" label={["Record"]} w="w-[141px]" />
              <Stack ml="ml-[10px]">
                <IconBtn icon="msg" label="Insert message" />
                <IconBtn icon="msg2" label="Insert base point" />
                <IconBtn icon="msg3" label="Pause for input" />
              </Stack>
              <Rule ml="ml-[28px]" />
              <Stack ml="ml-[18px]">
                <div className="flex pl-[8px]">
                  <Small icon="play" label="Play" gap="gap-[19px]" />
                  <span className="ml-[40px] flex gap-[36px]">
                    <IconBtn icon="macro1" label="Preference" />
                    <IconBtn icon="macro2" label="Manage action macros" />
                  </span>
                </div>
                <Combo label="Action macro" value="ActMacro001" w="w-[375px]" h="h-[64px]" />
              </Stack>
            </Panel>
            <Panel title="Customization" w="w-[618px]">
              <Big icon="cui" label={["User", "Interface"]} w="w-[170px]" />
              <Big icon="palettes" label={["Tool", "Palettes"]} w="w-[134px]" />
              <Stack ml="ml-[16px]">
                <Small icon="imp" label="Import" gap="gap-[16px]" />
                <Small icon="exp" label="Export" gap="gap-[16px]" />
                <Small icon="alias" label="Edit Aliases" arrow gap="gap-[16px]" />
              </Stack>
            </Panel>
            <Panel title="Applications" arrow w="w-[711px]">
              <Big icon="load" label={["Load", "Application"]} w="w-[214px]" />
              <Big icon="script" label={["Run", "Script"]} w="w-[106px]" />
              <Stack ml="ml-[18px]">
                <Small icon="vba" label="Visual Basic Editor" gap="gap-[16px]" />
                <Small icon="lisp" label="Visual LISP Editor" gap="gap-[16px]" />
                <Small icon="runvba" label="Run VBA Macro" gap="gap-[16px]" />
              </Stack>
            </Panel>
            <Panel title="CAD Standards" w="w-[359px]">
              <Stack ml="ml-[19px]">
                <Small icon="ltrans" label="Layer Translator" gap="gap-[16px]" />
                <Small icon="check" label="Check" gap="gap-[16px]" />
                <Small icon="config" label="Configure" gap="gap-[16px]" />
              </Stack>
            </Panel>
            <Panel title="Cleanup" w="w-[588px]" last>
              <Big icon="find" label={["Find", "Non-Purgeable Items"]} w="w-[374px]" />
              <Stack ml="ml-[10px]">
                <Small icon="purge" label="Purge" gap="gap-[12px]" />
                <Small icon="overkill" label="Overkill" gap="gap-[12px]" />
                <Small icon="audit" label="Audit" gap="gap-[12px]" />
              </Stack>
            </Panel>
          </div>
          <div className="h-[18px] bg-[#d9d9d9]" />
        </div>
      </section>

      {/* Marker strokes drawn across the ribbons */}
      <svg viewBox="0 0 4096 2202" className="pointer-events-none absolute left-0 top-0 w-full" aria-hidden="true">
        {marks.map((m) => (
          <polygon key={m} points={m} fill="#c12d00" />
        ))}
      </svg>
    </main>
  );
}
